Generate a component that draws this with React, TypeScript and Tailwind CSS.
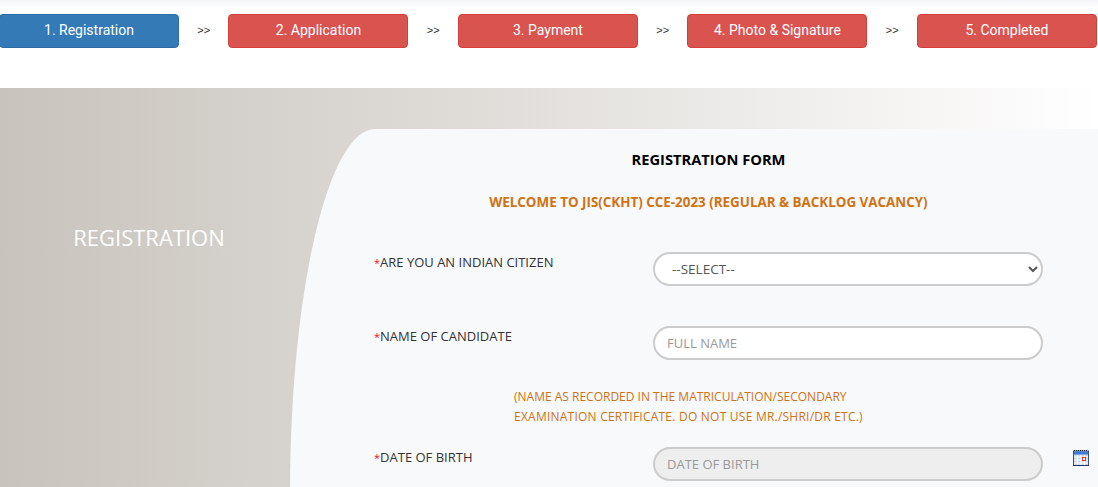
const steps = ['1. Registration', '2. Application', '3. Payment', '4. Photo & Signature', '5. Completed'];

const bodyFont = "font-['Open_Sans','Noto_Sans',sans-serif]";

function Star() {
  return <span className="text-[11px] text-[#e8112d]">*</span>;
}

function CalendarIcon() {
  return (
    <svg width="16" height="16" viewBox="0 0 16 16" className="block">
      <rect x="0.5" y="1" width="15" height="14.5" fill="#c9d6ec" stroke="#37507c" />
      <rect x="1" y="1.5" width="14" height="3" fill="#3b78dc" />
      <path d="M1 0.5h14" stroke="#222" strokeDasharray="1 1" />
      <path d="M1 7h14M1 10h14M1 13h14M4.5 5v10M8 5v10M11.5 5v10" stroke="#fff" />
      <rect x="9.5" y="7.5" width="3" height="3" fill="#fff" stroke="#dd3b12" />
      <path d="M0.5 15.5h15" stroke="#1f3560" />
    </svg>
  );
}

function Row({ label, children, className }: { label: string; children: React.ReactNode; className: string }) {
  return (
    <div className={`flex items-start ${className}`}>
      <label className="w-[279px] shrink-0 text-[13px] leading-5 text-[#333]">
        <Star />
        {label}
      </label>
      {children}
    </div>
  );
}

export default function App() {
  return (
    <div className={`h-[487px] w-[1098px] overflow-hidden bg-white ${bodyFont}`}>
      <div className="h-[88px] bg-gradient-to-b from-[#f4f5f8] to-white to-[8px] pt-[14px] pr-px">
        <div className="-ml-px flex items-center justify-between">
          {steps.map((step, i) => (
            <div key={step} className="contents">
              <div
                className={`flex h-[34px] w-[180px] items-center justify-center rounded-[4px] border pb-[2px] font-['Roboto',sans-serif] text-[14px] text-white ${
                  i === 0 ? 'border-[#2e6da4] bg-[#337ab7]' : 'border-[#d43f3a] bg-[#d9534f]'
                }`}
              >
                {step}
              </div>
              {i < steps.length - 1 && (
                <span className="pb-[2px] font-['Liberation_Sans',sans-serif] text-[11px] text-[#333]">&gt;&gt;</span>
              )}
            </div>
          ))}
        </div>
      </div>

      <div className="flex h-[399px] items-start overflow-hidden bg-gradient-to-r from-[#c8c3bc] to-white pt-[41px]">
        <div className="w-[290px] shrink-0 pt-[92px] pl-[8px]">
          <h2 className="text-center text-[22px] leading-8 font-medium text-white">REGISTRATION</h2>
        </div>
        <div className="h-[760px] flex-1 rounded-tl-[85px_365px] bg-[#f8f9fb] pl-[84px]">
          <div className="w-[669px]">
            <h3 className="pt-[20px] text-center text-[14.7px] leading-5 font-bold text-black">REGISTRATION FORM</h3>
            <p className="pt-[23px] text-center text-[13.4px] leading-5 font-bold text-[#cf7313]">
              WELCOME TO JIS(CKHT) CCE-2023 (REGULAR &amp; BACKLOG VACANCY)
            </p>

            <Row label="ARE YOU AN INDIAN CITIZEN" className="mt-[40px]">
              <select className="h-[34px] w-[390px] rounded-full border-2 border-[#ccc] bg-white px-[13px] text-[13.5px] text-[#555]">
                <option>--SELECT--</option>
              </select>
            </Row>

            <Row label="NAME OF CANDIDATE" className="mt-[40px]">
              <input
                placeholder="FULL NAME"
                className="h-[34px] w-[390px] rounded-full border-2 border-[#ccc] bg-white px-[12px] pb-[1px] text-[13px] placeholder:text-[#999]"
              />
            </Row>

            <p className="mt-[27px] ml-[140px] text-[12px] leading-5 text-[#cf7313]">
              (NAME AS RECORDED IN THE MATRICULATION/SECONDARY
              <br />
              <span className="tracking-[0.23px]">EXAMINATION CERTIFICATE. DO NOT USE MR./SHRI/DR ETC.)</span>
            </p>

            <Row label="DATE OF BIRTH" className="mt-[20px]">
              <input
                disabled
                placeholder="DATE OF BIRTH"
                className="h-[34px] w-[390px] shrink-0 rounded-full border-2 border-[#ccc] bg-[#eee] px-[12px] pb-[1px] text-[13px] placeholder:text-[#999]"
              />
              <div className="mt-[3px] ml-[30px] shrink-0">
                <CalendarIcon />
              </div>
            </Row>
          </div>
        </div>
      </div>
    </div>
  );
}
